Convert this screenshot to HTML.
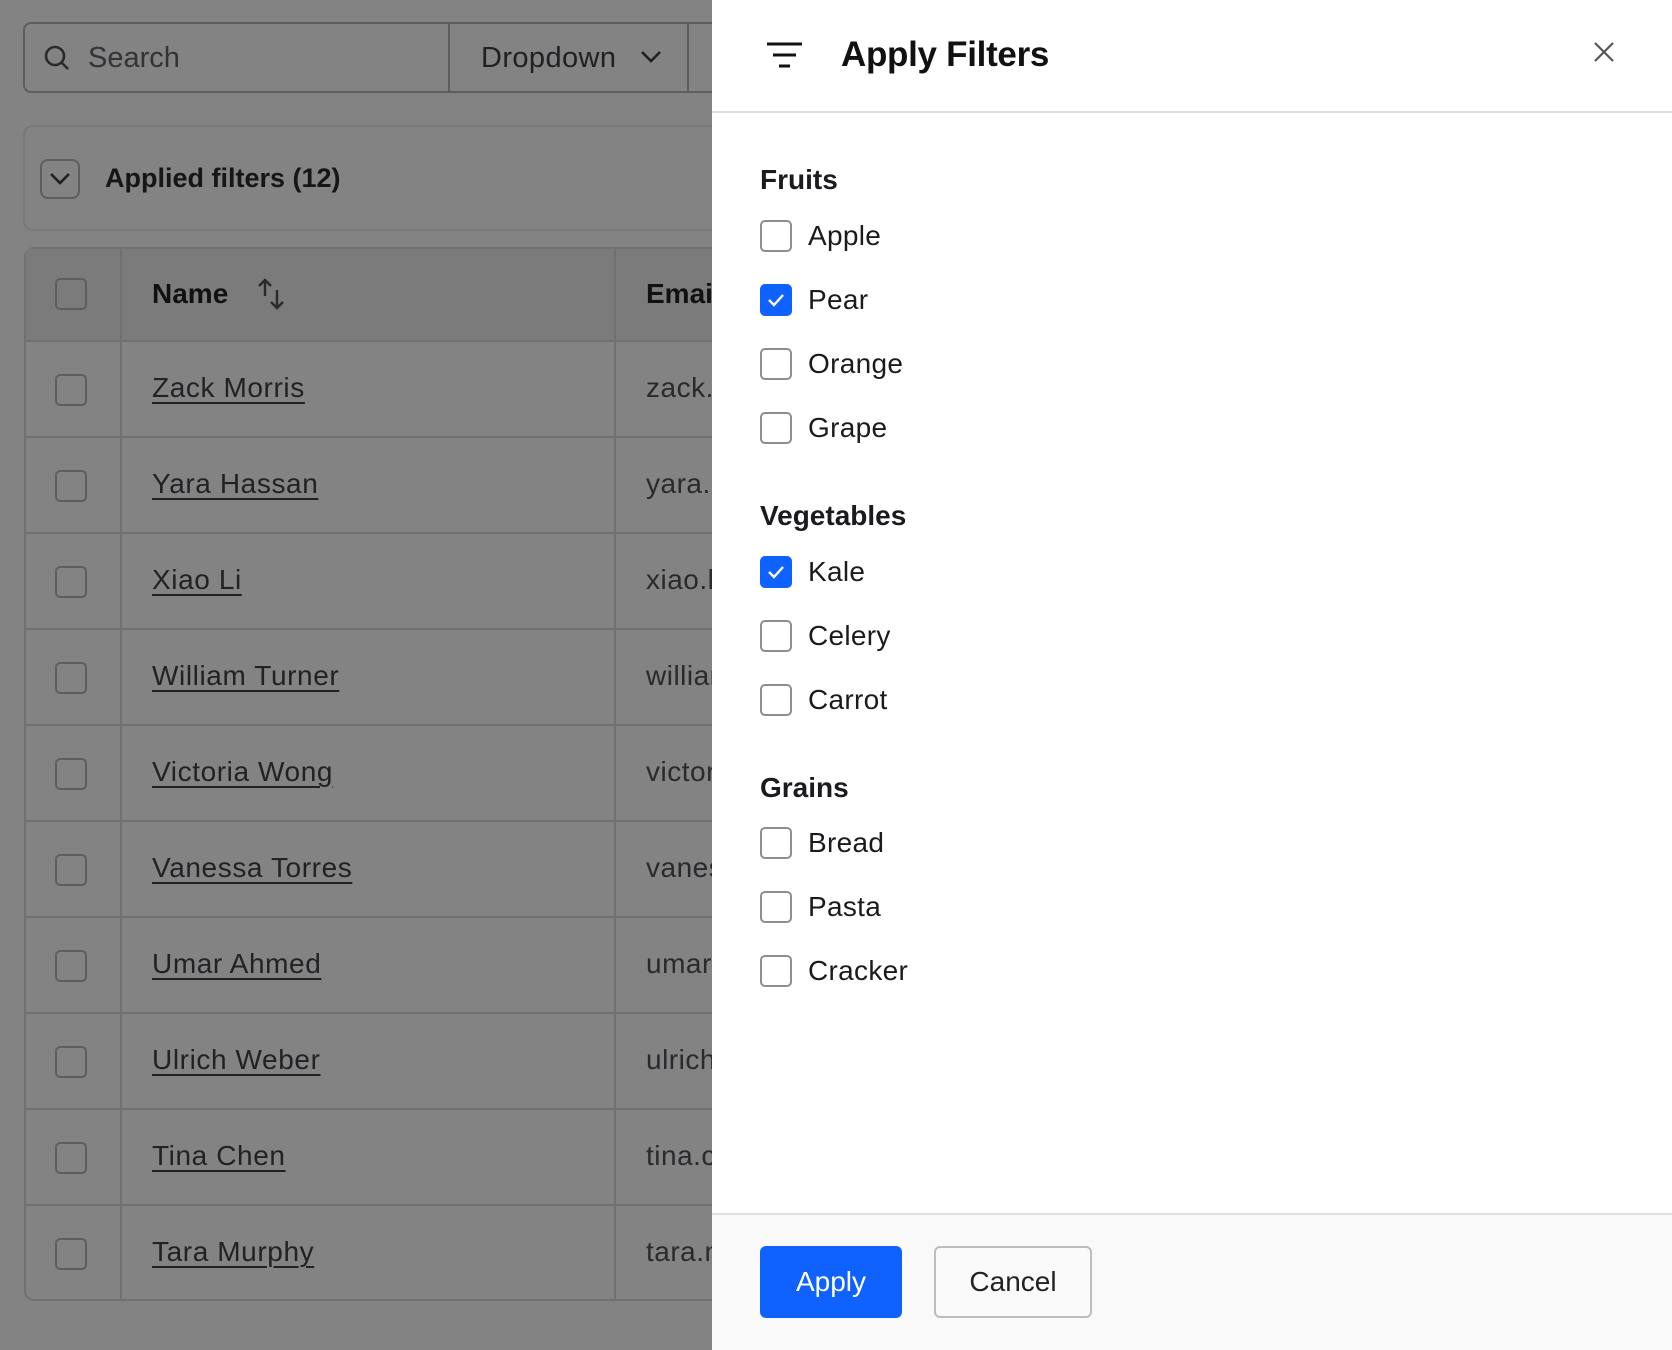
<!DOCTYPE html>
<html><head><meta charset="utf-8"><style>
*{box-sizing:border-box;margin:0;padding:0}
body{width:1672px;height:1350px;position:relative;overflow:hidden;background:#838383;font-family:"Liberation Sans",sans-serif;color:#1b1b1f}
.abs{position:absolute}
.cb{position:absolute;width:32px;height:32px;border:2px solid #5e5e62;border-radius:5px}
.row{position:absolute;left:24px;width:700px;height:96px;border-top:2px solid #717171}
.row .cb{left:31px;top:32px}
.row .nm{position:absolute;left:128px;top:30px;font-size:28px;letter-spacing:0.6px;color:#222226;text-decoration:underline;text-underline-offset:5px;text-decoration-thickness:2px}
.row .em{position:absolute;left:622px;top:30px;font-size:28px;letter-spacing:0.5px;color:#2a2a2e}
.vl{position:absolute;top:247px;height:1054px;width:2px;background:#717171}
.panel{position:absolute;left:712px;top:0;width:960px;height:1350px;background:#fff}
.pcb{position:absolute;left:48px;width:32px;height:32px;border:2px solid #8d8d94;border-radius:5px;background:#fff}
.pcb.on{background:#0f62fe;border-color:#0f62fe}
.lab{position:absolute;left:96px;font-size:28px;letter-spacing:0.3px;color:#1b1b1f;line-height:32px}
.hd{position:absolute;left:48px;font-size:28px;font-weight:bold;line-height:32px}
</style></head><body>
<div class="abs" style="left:23px;top:22px;width:700px;height:71px;border:2px solid #5e5e62;border-radius:8px;"></div>
<svg class="abs" style="left:42px;top:43px" width="30" height="30" viewBox="0 0 30 30"><circle cx="13" cy="13" r="9" fill="none" stroke="#2a2a2e" stroke-width="2.6"/><path d="M19.5 19.5L26 26" stroke="#2a2a2e" stroke-width="2.6"/></svg>
<div class="abs" style="left:88px;top:42px;font-size:29px;color:#333338">Search</div>
<div class="abs" style="left:448px;top:23px;width:2px;height:69px;background:#5e5e62"></div>
<div class="abs" style="left:481px;top:42px;font-size:29px;letter-spacing:0.4px;color:#1f1f24">Dropdown</div>
<svg class="abs" style="left:640px;top:49px" width="22" height="16" viewBox="0 0 22 16"><path d="M2 3l9 9 9-9" fill="none" stroke="#1f1f24" stroke-width="2.6"/></svg>
<div class="abs" style="left:687px;top:23px;width:2px;height:69px;background:#5e5e62"></div>

<div class="abs" style="left:23px;top:125px;width:720px;height:106px;border:2px solid #787878;border-radius:10px"></div>
<div class="abs" style="left:40px;top:159px;width:40px;height:40px;border:2px solid #5e5e62;border-radius:8px"></div>
<svg class="abs" style="left:48px;top:170px" width="24" height="18" viewBox="0 0 24 18"><path d="M3 4l9 9 9-9" fill="none" stroke="#1f1f24" stroke-width="2.6"/></svg>
<div class="abs" style="left:105px;top:163px;font-size:27px;font-weight:bold;color:#161619">Applied filters (12)</div>

<div class="abs" style="left:24px;top:247px;width:720px;height:1054px;border:2px solid #717171;border-radius:10px"></div>
<div class="abs" style="left:26px;top:249px;width:720px;height:92px;background:#7b7b7b"></div>
<div class="cb" style="left:55px;top:278px"></div>
<div class="abs" style="left:152px;top:278px;font-size:28px;font-weight:bold;color:#111">Name</div>
<svg class="abs" style="left:256px;top:276px" width="32" height="36" viewBox="0 0 32 36"><path d="M9 20V4M3 10l6-6 6 6M21 14v18M15 26l6 6 6-6" fill="none" stroke="#2a2a2e" stroke-width="2.4"/></svg>
<div class="abs" style="left:646px;top:278px;font-size:28px;font-weight:bold;color:#111">Email</div>
<div class="vl" style="left:120px"></div><div class="vl" style="left:614px"></div>

<div class="row" style="top:340px"><div class="cb"></div><div class="nm">Zack Morris</div><div class="em">zack.morris</div></div>
<div class="row" style="top:436px"><div class="cb"></div><div class="nm">Yara Hassan</div><div class="em">yara.hassan</div></div>
<div class="row" style="top:532px"><div class="cb"></div><div class="nm">Xiao Li</div><div class="em">xiao.li</div></div>
<div class="row" style="top:628px"><div class="cb"></div><div class="nm">William Turner</div><div class="em">william</div></div>
<div class="row" style="top:724px"><div class="cb"></div><div class="nm">Victoria Wong</div><div class="em">victoria</div></div>
<div class="row" style="top:820px"><div class="cb"></div><div class="nm">Vanessa Torres</div><div class="em">vanessa</div></div>
<div class="row" style="top:916px"><div class="cb"></div><div class="nm">Umar Ahmed</div><div class="em">umar</div></div>
<div class="row" style="top:1012px"><div class="cb"></div><div class="nm">Ulrich Weber</div><div class="em">ulrich</div></div>
<div class="row" style="top:1108px"><div class="cb"></div><div class="nm">Tina Chen</div><div class="em">tina.chen</div></div>
<div class="row" style="top:1204px"><div class="cb"></div><div class="nm">Tara Murphy</div><div class="em">tara.m</div></div>

<div class="panel">
<svg class="abs" style="left:54px;top:42px" width="38" height="28" viewBox="0 0 38 28"><path d="M1 2h35M7 13h23M13 24h11" stroke="#111" stroke-width="3"/></svg>
<div class="abs" style="left:129px;top:35px;font-size:35px;font-weight:bold;letter-spacing:-0.3px;color:#111">Apply Filters</div>
<svg class="abs" style="left:880px;top:40px" width="24" height="24" viewBox="0 0 24 24"><path d="M3 3l18 18M21 3L3 21" stroke="#555" stroke-width="2.2"/></svg>
<div class="abs" style="left:0;top:111px;width:960px;height:2px;background:#dedee3"></div>

<div class="hd" style="top:164px">Fruits</div>
<div class="pcb" style="top:220px"></div><div class="lab" style="top:220px">Apple</div>
<div class="pcb on" style="top:284px"><svg width="28" height="28" viewBox="0 0 28 28"><path d="M7 14l5 5 9-10" fill="none" stroke="#fff" stroke-width="2.4"/></svg></div><div class="lab" style="top:284px">Pear</div>
<div class="pcb" style="top:348px"></div><div class="lab" style="top:348px">Orange</div>
<div class="pcb" style="top:412px"></div><div class="lab" style="top:412px">Grape</div>
<div class="hd" style="top:500px">Vegetables</div>
<div class="pcb on" style="top:556px"><svg width="28" height="28" viewBox="0 0 28 28"><path d="M7 14l5 5 9-10" fill="none" stroke="#fff" stroke-width="2.4"/></svg></div><div class="lab" style="top:556px">Kale</div>
<div class="pcb" style="top:620px"></div><div class="lab" style="top:620px">Celery</div>
<div class="pcb" style="top:684px"></div><div class="lab" style="top:684px">Carrot</div>
<div class="hd" style="top:772px">Grains</div>
<div class="pcb" style="top:827px"></div><div class="lab" style="top:827px">Bread</div>
<div class="pcb" style="top:891px"></div><div class="lab" style="top:891px">Pasta</div>
<div class="pcb" style="top:955px"></div><div class="lab" style="top:955px">Cracker</div>

<div class="abs" style="left:0;top:1213px;width:960px;height:137px;background:#f9f9fa;border-top:2px solid #dedee3"></div>
<div class="abs" style="left:48px;top:1246px;width:142px;height:72px;background:#0f62fe;border-radius:6px;color:#fff;font-size:28px;text-align:center;line-height:72px">Apply</div>
<div class="abs" style="left:222px;top:1246px;width:158px;height:72px;background:#fafafa;border:2px solid #bdbdbd;border-radius:6px;color:#222;font-size:28px;text-align:center;line-height:68px">Cancel</div>
</div>
</body></html>
